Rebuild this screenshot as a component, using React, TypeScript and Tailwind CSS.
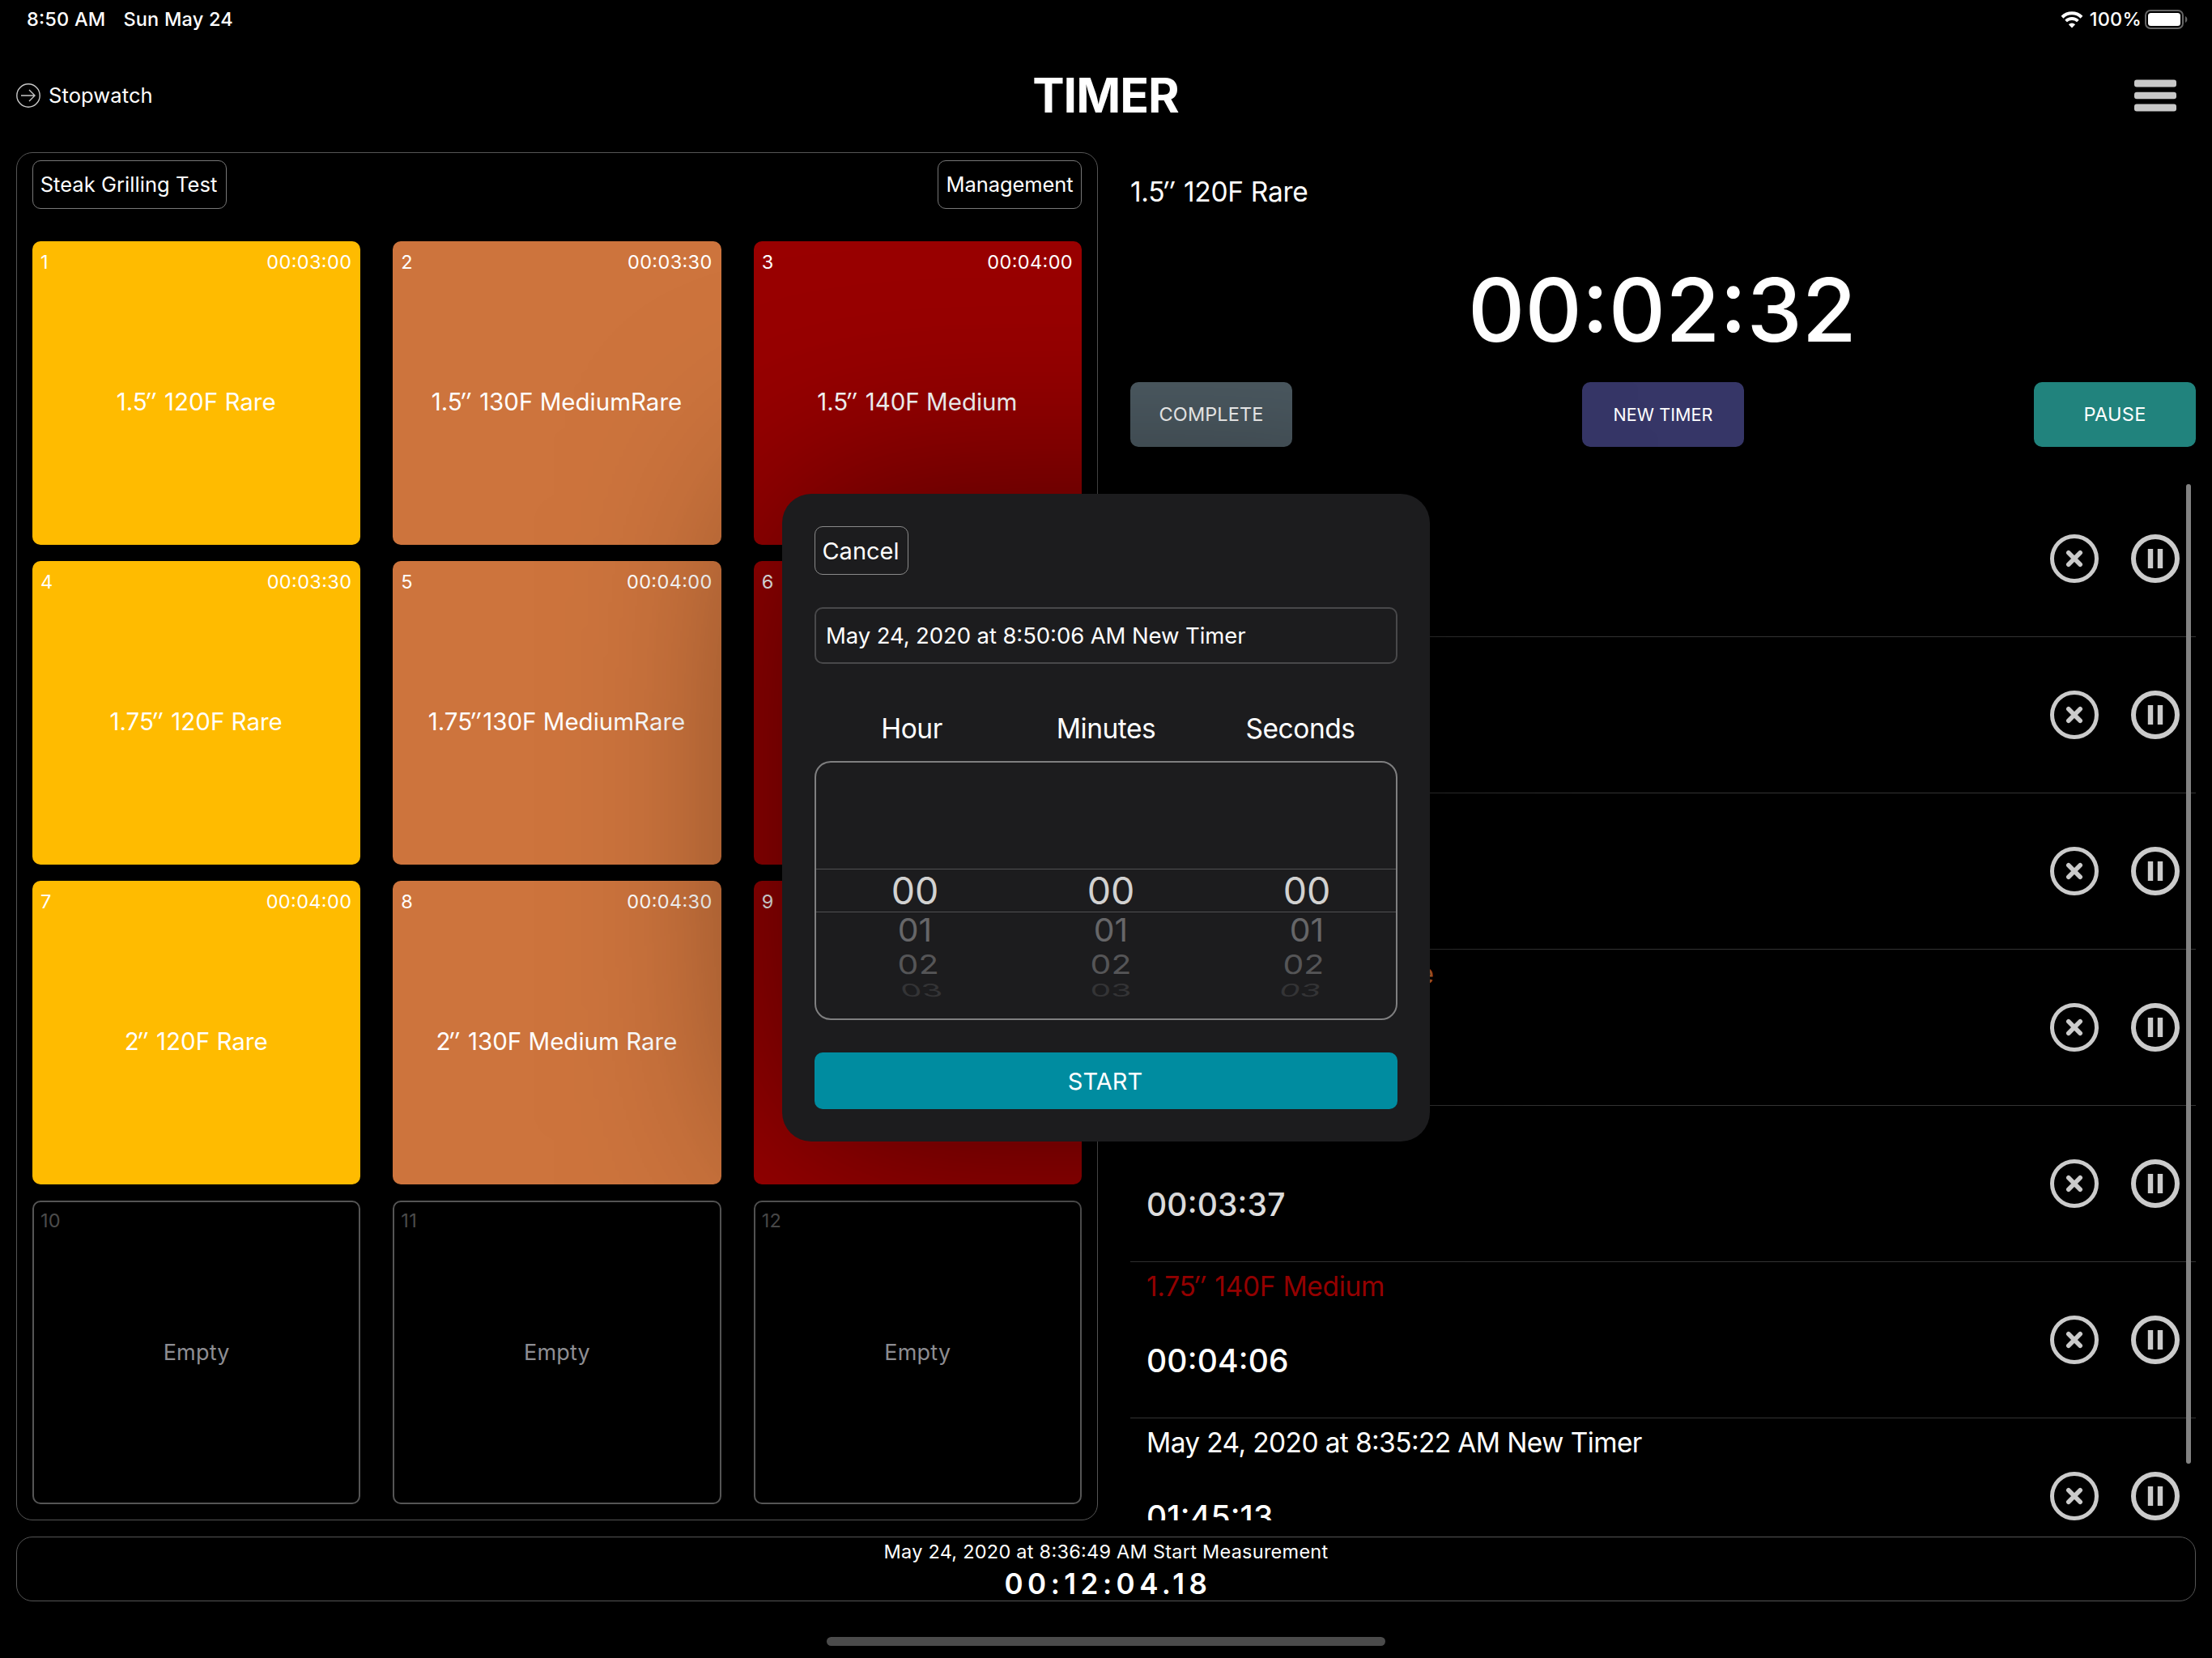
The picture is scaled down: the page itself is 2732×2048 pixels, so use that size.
interface Tile {
  id: number;
  label?: string;
  time?: string;
  color?: string;
}

interface TimerRow {
  id: number;
  name?: string;
  time?: string;
  color?: string;
}

const tiles: Tile[] = [
  { id: 1, label: "1.5″ 120F Rare", time: "00:03:00", color: "bg-[#ffbb00]" },
  { id: 2, label: "1.5″ 130F MediumRare", time: "00:03:30", color: "bg-[#cd743d]" },
  { id: 3, label: "1.5″ 140F Medium", time: "00:04:00", color: "bg-[#990000]" },
  { id: 4, label: "1.75″ 120F Rare", time: "00:03:30", color: "bg-[#ffbb00]" },
  { id: 5, label: "1.75″130F MediumRare", time: "00:04:00", color: "bg-[#cd743d]" },
  { id: 6, color: "bg-[#990000]" },
  { id: 7, label: "2″ 120F Rare", time: "00:04:00", color: "bg-[#ffbb00]" },
  { id: 8, label: "2″ 130F Medium Rare", time: "00:04:30", color: "bg-[#cd743d]" },
  { id: 9, color: "bg-[#990000]" },
  { id: 10 },
  { id: 11 },
  { id: 12 },
];

const timers: TimerRow[] = [
  { id: 1 },
  { id: 2 },
  { id: 3 },
  { id: 4, name: "1.75″130F MediumRare", color: "text-[#cd6a2f] tracking-[-0.3px]" },
  { id: 5, time: "00:03:37" },
  { id: 6, name: "1.75″ 140F Medium", time: "00:04:06", color: "text-[#990000] tracking-[-0.3px]" },
  {
    id: 7,
    name: "May 24, 2020 at 8:35:22 AM New Timer",
    time: "01:45:13",
    color: "text-white tracking-[-0.63px]",
  },
];

// Wheel rows get flatter and lean towards the middle column
const wheels = [
  {
    id: "hour",
    second: "[transform:scale(.88,.7)_skewX(2deg)] pl-[9px]",
    third: "[transform:scale(.88,.47)_skewX(8deg)] pl-[18px]",
  },
  {
    id: "minutes",
    second: "[transform:scale(.88,.7)]",
    third: "[transform:scale(.88,.47)]",
  },
  {
    id: "seconds",
    second: "[transform:scale(.88,.7)_skewX(-2deg)] pr-[9px]",
    third: "[transform:scale(.88,.47)_skewX(-8deg)] pr-[18px]",
  },
];

// The inch mark is slanted, the rest of the label is upright
function Label({ text }: { text: string }) {
  const [size, rest] = text.split("″");
  if (rest === undefined) return <span>{text}</span>;
  return (
    <span className="whitespace-pre">
      {size}
      <i className="-ml-[3px] mr-[3px]">″</i>
      {rest}
    </span>
  );
}

function StatusBar() {
  return (
    <div className="flex h-12 items-center pl-[33px] pr-[30px] text-[23.5px] font-medium tracking-[0.2px]">
      <span>8:50 AM</span>
      <span className="ml-[22px]">Sun May 24</span>
      <svg className="ml-auto" width="28" height="21" viewBox="0 0 28 21" fill="none">
        <path d="M2 7.2a17.2 17.2 0 0 1 24 0" stroke="white" strokeWidth="4" />
        <path d="M6.6 12a10.6 10.6 0 0 1 14.8 0" stroke="white" strokeWidth="3.8" />
        <path d="M14 20.4l-4.1-4.2a5.8 5.8 0 0 1 8.2 0z" fill="white" />
      </svg>
      <span className="ml-2">100%</span>
      <svg className="ml-1" width="53" height="24" viewBox="0 0 53 24" fill="none">
        <rect x="1" y="1" width="46" height="22" rx="6" stroke="#666" strokeWidth="2" />
        <rect x="4" y="4" width="40" height="16" rx="3.5" fill="white" />
        <path d="M50 8c3.2 1.4 3.2 6.6 0 8z" fill="#666" />
      </svg>
    </div>
  );
}

function Header() {
  return (
    <header className="grid h-[140px] grid-cols-3 items-center pl-5 pr-[44px]">
      <div className="flex items-center">
        <svg width="30" height="30" viewBox="0 0 30 30" fill="none" stroke="#c8c8c8" strokeWidth="1.4">
          <circle cx="15" cy="15" r="14.2" />
          <path d="M6 15h17M16 8l7 7-7 7" />
        </svg>
        <span className="ml-2.5 text-[25.5px] tracking-[0.1px]">Stopwatch</span>
      </div>
      <h1 className="pb-0.5 pl-[23px] text-center text-[59px] font-bold leading-none tracking-[-1px]">TIMER</h1>
      <svg className="ml-auto" width="52" height="40" viewBox="0 0 52 40" fill="#c8c8c8">
        <rect y="0.5" width="52" height="9" rx="3" />
        <rect y="15.8" width="52" height="8.4" rx="3" />
        <rect y="30.5" width="52" height="9" rx="3" />
      </svg>
    </header>
  );
}

function TileCard({ tile }: { tile: Tile }) {
  if (!tile.color) {
    return (
      <div className="flex flex-col rounded-[10px] border-2 border-[#555] px-2 pb-9">
        <div className="flex h-[38px] items-center pt-2 text-[23.5px] tracking-[0.3px] text-[#4b4b4b]">
          <span>{tile.id}</span>
        </div>
        <div className="flex flex-1 items-center justify-center text-[27px] tracking-[0.2px] text-[#8e8e93]">
          Empty
        </div>
      </div>
    );
  }
  return (
    <div className={`flex flex-col rounded-[10px] pb-5 pl-2.5 pr-[11px] ${tile.color}`}>
      <div className="flex h-[42px] items-center justify-between pt-2.5 text-[23.5px] tracking-[0.35px]">
        <span>{tile.id}</span>
        <span>{tile.time}</span>
      </div>
      <div className="flex flex-1 items-center justify-center text-[29.5px]">
        {tile.label && <Label text={tile.label} />}
      </div>
    </div>
  );
}

function TilePanel() {
  return (
    <section className="flex w-[1336px] flex-col rounded-[20px] border border-[#555] px-[19px] pb-[19px] pt-[9px]">
      <div className="flex justify-between text-[25.5px]">
        <button className="h-[60px] w-[240px] rounded-[10px] border border-[#777] pr-0.5 tracking-[0.05px]">
          Steak Grilling Test
        </button>
        <button className="h-[60px] w-[178px] rounded-[10px] border border-[#777] tracking-[-0.1px]">
          Management
        </button>
      </div>
      <div className="mt-10 grid flex-1 grid-cols-3 grid-rows-4 gap-x-10 gap-y-5">
        {tiles.map((tile) => (
          <TileCard key={tile.id} tile={tile} />
        ))}
      </div>
    </section>
  );
}

function RowIcons() {
  return (
    <div className="ml-auto flex items-center gap-10">
      <svg width="60" height="60" viewBox="0 0 60 60" fill="none" stroke="#cbcbcb">
        <circle cx="30" cy="30" r="27.5" strokeWidth="5" />
        <path d="M22.8 22.8l14.4 14.4M37.2 22.8l-14.4 14.4" strokeWidth="5.6" strokeLinecap="round" />
      </svg>
      <svg width="60" height="60" viewBox="0 0 60 60" fill="none" stroke="#cbcbcb">
        <circle cx="30" cy="30" r="27" strokeWidth="6" />
        <path d="M24 18v24M36 18v24" strokeWidth="6.4" />
      </svg>
    </div>
  );
}

function TimerPanel() {
  return (
    <section className="flex w-[1316px] flex-col">
      <div className="flex h-[97px] items-center pt-0.5 text-[33.5px] tracking-[-0.3px]">
        <Label text="1.5″ 120F Rare" />
      </div>
      <div className="flex h-[187px] items-center justify-center pr-0.5 pt-[7px] text-[109px] font-medium leading-none">
        00:02:32
      </div>
      <div className="flex justify-between text-[23.5px]">
        <button className="h-20 w-[200px] rounded-[10px] bg-[#4e5c64] tracking-[0.1px]">COMPLETE</button>
        <button className="h-20 w-[200px] rounded-[10px] bg-[#363667] pt-px text-[21.5px] tracking-[0.1px]">
          NEW TIMER
        </button>
        <button className="h-20 w-[200px] rounded-[10px] bg-[#21837d] tracking-[0.3px]">PAUSE</button>
      </div>
      <div className="relative mt-[42px] min-h-0 flex-1 overflow-hidden">
        {timers.map((timer) => (
          <div key={timer.id} className="flex h-[193px] items-center border-b border-[#333] pl-5 pr-5">
            <div className="flex h-full flex-col">
              <div className={`flex h-[60px] items-center text-[33.5px] ${timer.color ?? ""}`}>
                {timer.name && <Label text={timer.name} />}
              </div>
              <div className="flex h-[124px] items-center text-[39px] font-medium tracking-[0.15px]">
                {timer.time}
              </div>
            </div>
            <RowIcons />
          </div>
        ))}
        <div className="absolute right-1.5 top-1 h-[1210px] w-1.5 rounded-full bg-[#828282]" />
      </div>
    </section>
  );
}

function MeasureBar() {
  return (
    <footer className="mx-5 mt-5 flex h-20 flex-col items-center rounded-[20px] border border-[#555]">
      <div className="flex h-9 items-center text-[23.5px] tracking-[0.25px]">
        May 24, 2020 at 8:36:49 AM Start Measurement
      </div>
      <div className="flex h-[42px] items-center pl-[5px] text-[35px] font-semibold tracking-[5.5px] [font-feature-settings:'calt'_0]">
        00:12:04.18
      </div>
    </footer>
  );
}

function Picker() {
  return (
    <div className="relative h-80 overflow-hidden rounded-[20px] border-2 border-[#7f7f80]">
      <div className="absolute inset-x-0 top-[131px] h-[54px] border-y border-[#505052]" />
      <div className="ml-px flex w-[726px] pt-[131px] text-[46.5px] leading-none">
        {wheels.map((wheel) => (
          <div key={wheel.id} className="w-[242px] text-center">
            <div className="flex h-[54px] items-center justify-center text-[#d2d2d1]">00</div>
            <div className="flex h-11 items-center justify-center text-[#666668] [transform:scale(.88,.84)]">01</div>
            <div className={`flex h-10 items-center justify-center text-[#555557] ${wheel.second}`}>02</div>
            <div className={`flex h-6 items-center justify-center text-[#343436] ${wheel.third}`}>03</div>
          </div>
        ))}
      </div>
    </div>
  );
}

function NewTimerModal() {
  return (
    <div className="absolute left-[966px] top-[610px] flex h-[800px] w-[800px] flex-col rounded-[36px] bg-[#1c1c1e] p-10 shadow-[0_0_260px_rgba(0,0,0,0.54)]">
      <button className="h-[60px] w-[116px] self-start rounded-[10px] border border-[#8a8a8a] pr-0.5 pt-px text-[29px]">
        Cancel
      </button>
      <div className="mt-10 flex h-[70px] items-center rounded-[10px] border-2 border-[#48484a] px-3 pt-px text-[27.5px] tracking-[-0.1px]">
        May 24, 2020 at 8:50:06 AM New Timer
      </div>
      <div className="grid h-[120px] grid-cols-3 items-center pt-[41px] text-center text-[33.5px] tracking-[-0.45px]">
        <span>Hour</span>
        <span>Minutes</span>
        <span>Seconds</span>
      </div>
      <Picker />
      <button className="mt-10 h-[70px] rounded-[10px] bg-[#008ca0] pr-0.5 pt-px text-[29px]">START</button>
    </div>
  );
}

export default function App() {
  return (
    <div className="relative h-[2048px] w-[2732px] overflow-hidden bg-black font-['Inter',sans-serif] text-white [font-feature-settings:'calt'_1]">
      <StatusBar />
      <Header />
      <main className="flex h-[1690px] gap-10 px-5">
        <TilePanel />
        <TimerPanel />
      </main>
      <MeasureBar />
      <div className="mx-auto mt-11 h-[11px] w-[690px] rounded-full bg-[#4b4b4b]" />
      <NewTimerModal />
    </div>
  );
}
